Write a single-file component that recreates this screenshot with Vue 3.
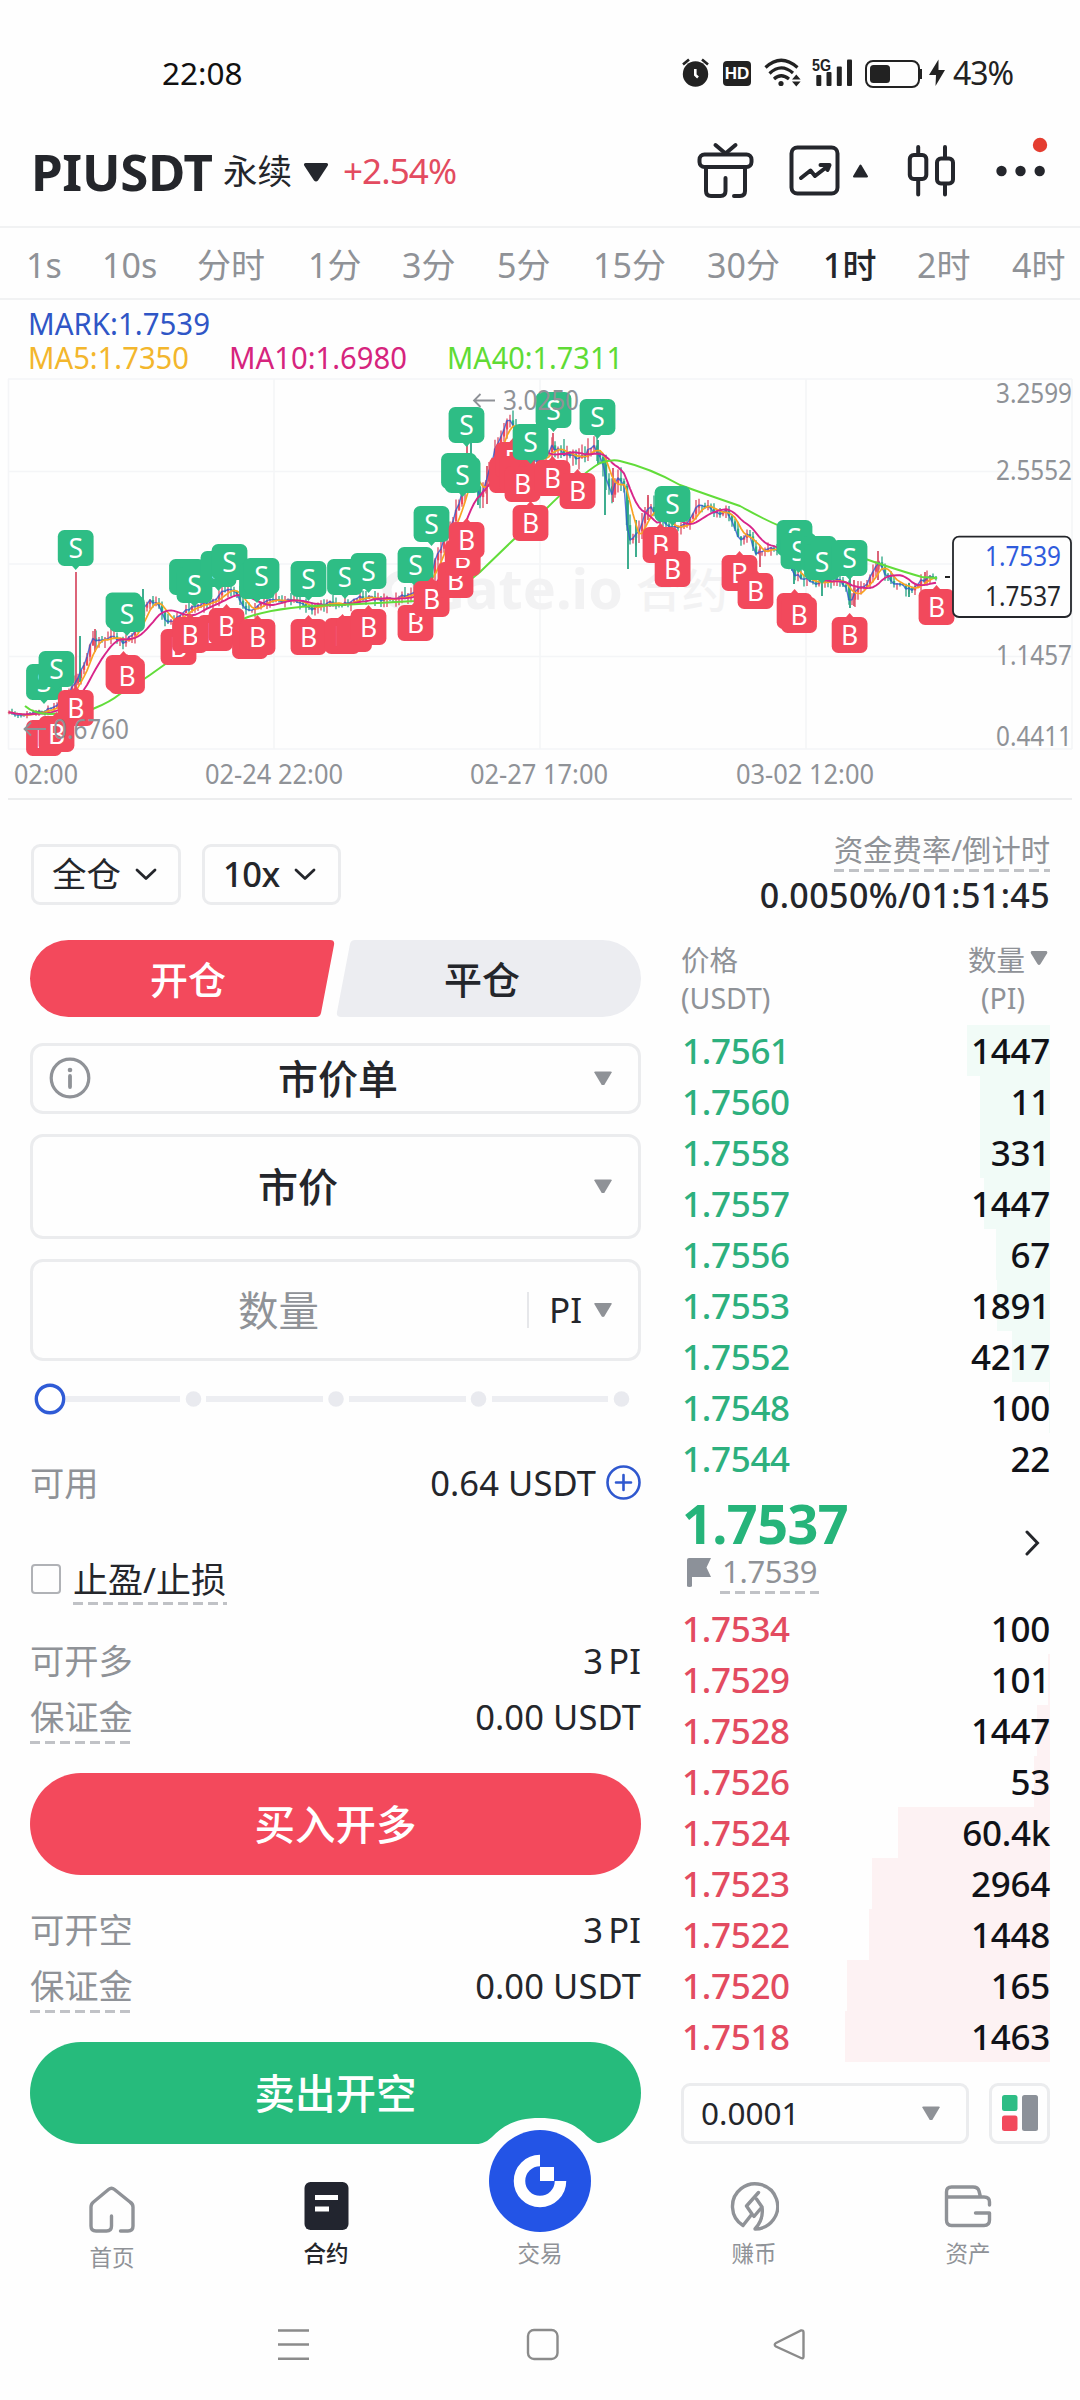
<script setup>
const periods = ['1s', '10s', '分时', '1分', '3分', '5分', '15分', '30分', '1时', '2时', '4时']
const periodX = [26, 102, 197, 308, 402, 497, 593, 707, 823, 917, 1012]
const activePeriod = '1时'

const asks = [
  ['1.7561', '1447', 83], ['1.7560', '11', 70], ['1.7558', '331', 70],
  ['1.7557', '1447', 66], ['1.7556', '67', 54], ['1.7553', '1891', 53],
  ['1.7552', '4217', 38], ['1.7548', '100', 1], ['1.7544', '22', 0]
]
const bids = [
  ['1.7534', '100', 0], ['1.7529', '101', 2], ['1.7528', '1447', 13],
  ['1.7526', '53', 16], ['1.7524', '60.4k', 152], ['1.7523', '2964', 178],
  ['1.7522', '1448', 181], ['1.7520', '165', 203], ['1.7518', '1463', 205]
]

/* Price track, in chart coordinates */
const track = [
  [8, 713], [20, 716], [45, 711], [58, 704], [70, 690], [76, 680], [85, 665], [92, 638], [100, 640], [115, 637],
  [125, 643], [135, 632], [143, 610], [150, 600], [158, 605], [165, 620], [172, 622], [185, 610], [200, 605],
  [215, 600], [225, 590], [235, 592], [245, 607], [250, 610], [260, 603], [275, 600], [300, 602], [312, 608],
  [330, 603], [345, 604], [360, 597], [380, 599], [400, 597], [415, 594], [425, 580], [432, 572], [437, 556],
  [445, 540], [452, 525], [460, 500], [468, 470], [475, 480], [480, 500], [488, 475], [495, 450], [502, 435],
  [508, 420], [515, 430], [525, 450], [535, 460], [545, 455], [553, 447], [562, 452], [575, 457], [585, 457],
  [593, 444], [600, 455], [605, 475], [612, 495], [618, 475], [625, 490], [628, 540], [635, 535], [640, 530],
  [647, 508], [655, 510], [665, 525], [680, 528], [690, 520], [697, 505], [710, 508], [718, 515], [725, 510],
  [732, 522], [740, 540], [748, 533], [757, 555], [768, 548], [775, 548], [785, 555], [795, 575], [805, 578],
  [815, 583], [825, 581], [840, 580], [847, 590], [850, 606], [856, 590], [865, 585], [872, 575], [878, 562],
  [888, 578], [898, 585], [912, 590], [922, 580], [930, 578], [937, 578]
]
const at = (x) => {
  let i = 1
  while (i < track.length - 1 && track[i][0] < x) i++
  const [x0, y0] = track[i - 1]
  const [x1, y1] = track[i]
  return y0 + ((y1 - y0) * (x - x0)) / (x1 - x0)
}
let seed = 11
const rnd = () => {
  seed = (seed * 16807) % 2147483647
  return seed / 2147483647
}
const candles = []
let prev = 713
for (let x = 9; x <= 937; x += 3) {
  const amp = x > 430 && x < 660 ? 6 : x < 60 ? 2 : 4
  const y = at(x) + (rnd() - 0.5) * amp
  const hi = Math.min(prev, y) - rnd() * amp * 2
  const lo = Math.max(prev, y) + rnd() * amp * 2
  candles.push({ x, o: prev, c: y, hi, lo, up: y < prev })
  prev = y
}
const spikes = [
  [76, 572, 688, 1], [80, 636, 682, 0], [95, 629, 652, 1], [143, 589, 612, 0], [467, 430, 475, 1], [471, 440, 475, 0],
  [478, 478, 505, 0], [487, 466, 504, 1], [553, 433, 450, 1], [598, 440, 465, 0], [605, 455, 515, 0],
  [613, 468, 502, 1], [628, 500, 569, 0], [636, 520, 557, 0], [648, 495, 520, 1], [760, 545, 567, 1],
  [794, 565, 584, 0], [822, 575, 596, 0], [850, 575, 608, 0], [854, 580, 606, 1], [878, 551, 580, 1],
  [909, 583, 597, 0], [925, 572, 584, 1]
]
const average = (n) =>
  candles
    .map((p, i) => {
      const w = candles.slice(Math.max(0, i - n + 1), i + 1)
      return p.x + ',' + (w.reduce((s, q) => s + q.c, 0) / w.length).toFixed(1)
    })
    .join(' ')
const markLine = average(1)
const ma5 = average(5)
const ma10 = average(11)
const ma40 = 'M25,706 Q34,714 50,714 Q85,713 95,708 Q110,702 120,694 Q140,682 150,675 L178,655 Q200,636 248,617 Q280,606 340,605 L415,601 Q455,594 480,572 L510,543 L545,510 Q580,475 600,463 Q612,459 620,461 Q650,468 680,485 Q705,494 740,506 Q765,520 780,526 L840,550 Q890,568 922,577 L937,578'

const markers = [
  ['S', 44, 682], ['S', 56.5, 669], ['S', 75.7, 548], ['S', 123.5, 610.5], ['S', 127, 614], ['S', 187, 577],
  ['S', 194.5, 585], ['S', 218.5, 569], ['S', 229.5, 562], ['S', 257, 581], ['S', 261.5, 576], ['S', 308.5, 579],
  ['S', 345, 577], ['S', 368.5, 571], ['S', 415.5, 565], ['S', 431.5, 524], ['S', 466.5, 425], ['S', 459, 471],
  ['S', 462.6, 475], ['S', 530.6, 442], ['S', 553.5, 410], ['S', 597.5, 417], ['S', 672.5, 504], ['S', 794.5, 538],
  ['S', 798.5, 551], ['S', 818.5, 554], ['S', 822, 562], ['S', 849.5, 558],
  ['B', 44, 738], ['B', 56.5, 734], ['B', 75.8, 708], ['B', 123.5, 673], ['B', 127, 676], ['B', 178.5, 647],
  ['B', 190, 635], ['B', 215, 633], ['B', 226.5, 626], ['B', 250, 641], ['B', 257.5, 637], ['B', 308.5, 637],
  ['B', 342.5, 636], ['', 354, 634], ['B', 368.5, 627], ['B', 415.5, 623], ['B', 431.6, 599], ['B', 455.5, 580],
  ['B', 462.7, 558], ['B', 466.6, 540], ['', 507, 475], ['B', 513, 460], ['', 517, 474], ['B', 522.5, 484], ['B', 530.5, 523],
  ['B', 552.5, 478], ['B', 577.5, 491], ['B', 660.5, 545], ['B', 672.6, 569], ['B', 739.5, 573], ['B', 755.5, 591],
  ['B', 794.6, 611], ['B', 799, 615], ['B', 849.6, 635], ['B', 936.5, 607]
].sort((a, b) => a[1] - b[1])
</script>

<template>
  <div class="screen">
    <div class="status">
      <span class="clock">22:08</span>
      <div class="status-right">
        <svg width="28" height="32" viewBox="682 57 28 32" fill="#222">
          <circle cx="695.5" cy="74" r="12.7" />
          <path d="M683 64.5L689 59.5M708 64.5L702 59.5" stroke="#222" stroke-width="2.6" />
          <path d="M695.3 69V75L698 77.5" stroke="#fff" stroke-width="2.6" fill="none" />
        </svg>
        <span class="hd">HD</span>
        <svg width="38" height="32" viewBox="764 56 38 32" fill="none" stroke="#222" stroke-width="3.2">
          <path d="M765.5 66.5Q781 52 797.5 66.5M769.5 72.5Q781 61.5 793 72M774 78Q781 71.5 789 78" />
          <circle cx="781" cy="82.5" r="2.6" fill="#222" stroke="none" />
          <path d="M792 78.5L796.3 73.5L800.6 78.5ZM792 80.5L796.3 85.5L800.6 80.5Z" fill="#222" stroke="none" />
        </svg>
        <svg width="42" height="32" viewBox="812 56 42 32" fill="#222">
          <text x="812" y="69.5" class="g5" textLength="19" lengthAdjust="spacingAndGlyphs">5G</text>
          <rect x="816.3" y="74" width="5" height="11" rx="1" />
          <rect x="826.5" y="71" width="5" height="14" rx="1" />
          <rect x="836.8" y="65.5" width="5" height="19.5" rx="1" />
          <rect x="847" y="58.5" width="5" height="26.5" rx="1" />
        </svg>
        <svg width="58" height="32" viewBox="865 56 58 32" fill="#222">
          <rect x="866" y="60" width="53" height="26" rx="7" fill="none" stroke="#222" stroke-width="2" />
          <rect x="870" y="64" width="20" height="18" rx="3.5" />
          <path d="M921 68V78" stroke="#222" stroke-width="2" />
        </svg>
        <svg class="bolt" width="17" height="28" viewBox="929 59 17 28"><path d="M938.5 59.5L929 75H936L935.5 86L945 70H938.5Z" fill="#222" /></svg>
        <span class="pct">43%</span>
      </div>
    </div>

    <header class="top">
      <span class="pair">PIUSDT</span>
      <span class="perp">永续</span>
      <svg class="caret" width="26" height="20" viewBox="302 162 26 20"><path d="M304.5 163H325.5Q328 163.5 326.5 166L317 180.5Q315 182.5 313 180.5L303.5 166Q302 163.5 304.5 163Z" fill="#24272d" /></svg>
      <span class="change">+2.54%</span>
      <svg class="tools" width="360" height="64" viewBox="695 136 360 64" fill="none" stroke="#24262c" stroke-width="4" stroke-linecap="round" stroke-linejoin="round">
        <rect x="699.5" y="154.5" width="52" height="12.5" rx="5" />
        <path d="M715.5 145L725.5 153.5L735.5 145" />
        <path d="M706 168V191Q706 196 711 196H720.5Q725.5 196 725.5 191V178" />
        <path d="M745 168V191Q745 196 740 196H734" />
        <rect x="791.5" y="147.5" width="46" height="46" rx="6" />
        <path d="M801 178L810.5 170.5L815 176L826 167.5M820.5 165H829.5L827.5 170" />
        <path d="M854 176.500L860.5 165.5L867 176.5Z" fill="#24262c" stroke-width="2" />
        <rect x="909.8" y="155" width="16.5" height="24" rx="4" />
        <path d="M918.2 147V153M918.2 181V194.5" />
        <rect x="937" y="158.5" width="16" height="25" rx="4" />
        <path d="M945 147V157M945 185V194.5" />
        <g fill="#24262c" stroke="none"><circle cx="1001.5" cy="171" r="5.2" /><circle cx="1020.5" cy="171" r="5.2" /><circle cx="1039.7" cy="171" r="5.2" /></g>
        <circle cx="1040" cy="145" r="7.2" fill="#e43d30" stroke="none" />
      </svg>
    </header>

    <nav class="periods">
      <span v-for="(p, i) in periods" :key="p" :class="{ on: p === activePeriod }" :style="{ width: (periodX[i + 1] || 1080) - periodX[i] + 'px' }">{{ p }}</span>
    </nav>

    <svg class="chart" width="1080" height="501" viewBox="0 300 1080 501">
      <g stroke="#f4f5f7" stroke-width="1.6" fill="none">
        <path d="M8 379H1072M8 471.5H1072M8 564H1072M8 656.5H1072M8 749H1072" />
        <path d="M8.5 379V749M274 379V749M540 379V749M806 379V749M1072 379V749" />
      </g>
      <path d="M8 799H1072" stroke="#e6e7e9" stroke-width="1.6" />
      <g fill="#f2f2f3">
        <circle cx="402" cy="590" r="15" fill="none" stroke="#f2f2f3" stroke-width="9" />
        <text x="425" y="609" class="wm" textLength="198" lengthAdjust="spacingAndGlyphs">Gate.io</text>
        <text x="636" y="607" class="wmc" textLength="92" lengthAdjust="spacingAndGlyphs">合约</text>
      </g>

      <g class="legend">
        <text x="28" y="334.5" fill="#2f56c6" textLength="182" lengthAdjust="spacingAndGlyphs">MARK:1.7539</text>
        <text x="28" y="368.5" fill="#f3b62c" textLength="161" lengthAdjust="spacingAndGlyphs">MA5:1.7350</text>
        <text x="229" y="368.5" fill="#d6247d" textLength="178" lengthAdjust="spacingAndGlyphs">MA10:1.6980</text>
        <text x="447" y="368.5" fill="#5fdb35" textLength="176" lengthAdjust="spacingAndGlyphs">MA40:1.7311</text>
      </g>

      <g stroke-width="1.3">
        <template v-for="c in candles" :key="c.x">
          <path :d="`M${c.x} ${c.hi}V${c.lo}`" :stroke="c.up ? '#dd4a62' : '#29a583'" />
          <path :d="`M${c.x} ${c.o}V${c.c}`" :stroke="c.up ? '#f1495d' : '#2bb083'" stroke-width="2.4" />
        </template>
        <path v-for="s in spikes" :key="s[0]" :d="`M${s[0]} ${s[1]}V${s[2]}`" :stroke="s[3] ? '#d9546a' : '#2aa583'" stroke-width="1.8" />
      </g>
      <g fill="none" stroke-width="1.7" stroke-linejoin="round">
        <polyline :points="markLine" stroke="#2f5bd0" stroke-width="1.4" opacity="0.8" />
        <polyline :points="ma5" stroke="#f8a323" />
        <polyline :points="ma10" stroke="#d8258a" stroke-width="1.9" />
        <path :d="ma40" stroke="#62dc3a" stroke-width="2" />
      </g>

      <g v-for="m in markers" :key="m.join()" class="pin">
        <rect :x="m[1] - 17.9" :y="m[2] - 18" width="35.8" height="36" rx="6.5" :fill="m[0] === 'S' ? '#2ebd85' : '#f2495c'" />
        <path v-if="m[0] === 'S'" :d="`M${m[1] - 4} ${m[2] + 17.5}h8l-4 4.5z`" fill="#2ebd85" />
        <path v-else :d="`M${m[1] - 4} ${m[2] - 17.5}h8l-4 -4.5z`" fill="#f2495c" />
        <text v-if="m[0]" :x="m[1]" :y="m[2] + 9.5">{{ m[0] }}</text>
      </g>

      <g class="axis">
        <path d="M495 400.5H474M480.5 394L474 400.5L480.5 407" />
        <text x="503" y="409.5" textLength="76" lengthAdjust="spacingAndGlyphs">3.0250</text>
        <path d="M46 729H24.5M31 722.5L24.5 729L31 735.5" />
        <text x="53" y="738.5" textLength="76" lengthAdjust="spacingAndGlyphs">0.6760</text>
        <text x="996" y="402.5" textLength="76" lengthAdjust="spacingAndGlyphs">3.2599</text>
        <text x="996" y="479.5" textLength="76" lengthAdjust="spacingAndGlyphs">2.5552</text>
        <text x="996" y="664.5" textLength="76" lengthAdjust="spacingAndGlyphs">1.1457</text>
        <text x="996" y="745.5" textLength="76" lengthAdjust="spacingAndGlyphs">0.4411</text>
        <text x="14" y="783.5" textLength="64" lengthAdjust="spacingAndGlyphs">02:00</text>
        <text x="205" y="783.5" textLength="138" lengthAdjust="spacingAndGlyphs">02-24 22:00</text>
        <text x="470" y="783.5" textLength="138" lengthAdjust="spacingAndGlyphs">02-27 17:00</text>
        <text x="736" y="783.5" textLength="138" lengthAdjust="spacingAndGlyphs">03-02 12:00</text>
      </g>
      <path d="M945 577H950" stroke="#222" stroke-width="2" />
      <rect x="953" y="536.7" width="118" height="80.3" rx="6" fill="#fefefe" stroke="#24262b" stroke-width="1.8" />
      <g class="legend tag">
        <text x="985" y="565.5" fill="#2f5bdc" textLength="76" lengthAdjust="spacingAndGlyphs">1.7539</text>
        <text x="985" y="605.5" fill="#24262b" textLength="76" lengthAdjust="spacingAndGlyphs">1.7537</text>
      </g>
    </svg>

    <main class="trade">
      <section class="form">
        <div class="selects">
          <button class="pick w1">全仓<svg width="22" height="13" viewBox="0 0 22 13"><path d="M2 2L11 10.5L20 2" /></svg></button>
          <button class="pick w2">10x<svg width="22" height="13" viewBox="0 0 22 13"><path d="M2 2L11 10.5L20 2" /></svg></button>
        </div>
        <div class="sides">
          <svg width="611" height="77" viewBox="0 0 611 77">
            <path d="M38.5 0H300Q305 0 304 5L291 73Q290 77 286 77H38.5A38.5 38.5 0 0 1 38.5 0Z" fill="#f3495c" />
            <path d="M325 0H572.5A38.5 38.5 0 0 1 572.5 77H311Q306 77 307 72L320 4Q321 0 325 0Z" fill="#ecedf1" />
          </svg>
          <div class="side-text"><span class="open">开仓</span><span class="close">平仓</span></div>
        </div>
        <div class="field f1">
          <svg class="info" width="42" height="42" viewBox="0 0 42 42" fill="none" stroke="#8f9297" stroke-width="3.2" stroke-linecap="round"><circle cx="21" cy="21" r="18.8" /><path d="M21 19V30" stroke-width="3.8" /><circle cx="21" cy="13" r="2.3" fill="#8f9297" stroke="none" /></svg>
          <span class="val">市价单</span>
          <i class="tri"></i>
        </div>
        <div class="field f2"><span class="val">市价</span><i class="tri"></i></div>
        <div class="field f3"><span class="val ph">数量</span><span class="unit">PI</span><i class="tri"></i></div>
        <svg class="slider" width="611" height="32" viewBox="30 1383 611 32">
          <path d="M66 1399H180M206 1399H323M349 1399H466M492 1399H608" stroke="#edeef2" stroke-width="6" />
          <circle v-for="x in [193.5, 336, 478.5, 621.5]" :key="x" :cx="x" cy="1399" r="7.8" fill="#e9eaef" />
          <circle cx="50" cy="1399" r="13.7" fill="#fff" stroke="#2f5bd6" stroke-width="3.4" />
        </svg>
        <div class="line avail">
          <span class="lab">可用</span>
          <span class="num">0.64 USDT</span>
          <svg width="35" height="35" viewBox="0 0 35 35" fill="none" stroke="#2f58cf" stroke-width="2.6" stroke-linecap="round"><circle cx="17.5" cy="17.5" r="16" /><path d="M17.5 10V25M10 17.5H25" /></svg>
        </div>
        <div class="tpsl"><i class="box"></i><span class="dash">止盈/止损</span></div>
        <div class="line l1"><span class="lab">可开多</span><span class="num tight">3 PI</span></div>
        <div class="line l2"><span class="lab dash">保证金</span><span class="num">0.00 USDT</span></div>
        <button class="cta buy">买入开多</button>
        <div class="line l3"><span class="lab">可开空</span><span class="num tight">3 PI</span></div>
        <div class="line l2"><span class="lab dash">保证金</span><span class="num">0.00 USDT</span></div>
        <button class="cta sell">卖出开空</button>
      </section>

      <section class="book">
        <div class="funding"><span class="ft dash">资金费率/倒计时</span><span class="fv">0.0050%/01:51:45</span></div>
        <div class="heads">
          <div>价格<br />(USDT)</div>
          <div class="hr"><span>数量<br />(PI)</span><svg width="18" height="15" viewBox="0 0 18 15"><path d="M2 0H16Q18 .5 17 2.5L10.5 13Q9 15 7.5 13L1 2.5Q0 .5 2 0Z" fill="#8f9297" /></svg></div>
        </div>
        <div v-for="r in asks" :key="r[0]" class="lvl ask">
          <span>{{ r[0] }}</span><b>{{ r[1] }}</b><i :style="{ width: r[2] + 'px' }"></i>
        </div>
        <div class="mid">
          <div>
            <div class="last">1.7537</div>
            <div class="mark">
              <svg width="24" height="30" viewBox="0 0 24 30"><path d="M0 2Q0 0 2 0H24L19.5 9.5L24 19H5V28Q5 29 2.5 29T0 28Z" fill="#8c9199" /></svg>
              <span class="dash">1.7539</span>
            </div>
          </div>
          <svg class="go" width="15" height="26" viewBox="0 0 15 26"><path d="M2 2L12.5 13L2 24" fill="none" stroke="#24262b" stroke-width="3" stroke-linecap="round" /></svg>
        </div>
        <div v-for="r in bids" :key="r[0]" class="lvl bid">
          <span>{{ r[0] }}</span><b>{{ r[1] }}</b><i :style="{ width: r[2] + 'px' }"></i>
        </div>
        <div class="depth">
          <div class="step">0.0001<i class="tri"></i></div>
          <div class="mode"><svg width="36" height="36" viewBox="0 0 36 36"><rect width="15.5" height="16" rx="2.5" fill="#2ebd85" /><rect y="20.5" width="15.5" height="15.5" rx="2.5" fill="#f2495c" /><rect x="20" width="16" height="36" rx="2.5" fill="#8c9199" /></svg></div>
        </div>
      </section>
    </main>

    <footer class="tabs">
      <svg class="bump" width="140" height="32" viewBox="470 2114 140 32"><path d="M470 2145Q484 2145 492 2137C502 2127 514 2118 540 2118S578 2127 588 2137Q596 2145 610 2145V2146H470Z" fill="#fefefe" /></svg>
      <div class="tab home">
        <svg width="50" height="50" viewBox="87 2184 50 50" fill="none" stroke="#8f9297" stroke-width="3.4" stroke-linecap="round" stroke-linejoin="round"><path d="M111.5 2216V2226Q111.5 2231 106.5 2231H96Q91 2231 91 2226V2207Q91 2204 93.5 2202L108.5 2189.5Q111.5 2187 114.5 2189.5L130 2202Q133 2204 133 2207V2226Q133 2231 128 2231H120.5" /></svg>
        首页
      </div>
      <div class="tab on">
        <svg width="50" height="50" viewBox="301 2181 50 50"><rect x="304.5" y="2182" width="44" height="48" rx="6" fill="#22252f" /><path d="M315 2197.5H338M315 2209H329" stroke="#fff" stroke-width="5" /></svg>
        合约
      </div>
      <div class="tab trade-tab">
        <svg width="102" height="102" viewBox="0 0 102 102"><circle cx="51" cy="51" r="51" fill="#2354e6" /><path d="M51 30.5A20.5 20.5 0 1 0 71.5 51" fill="none" stroke="#fff" stroke-width="11.5" /><rect x="51" y="37" width="14" height="14" fill="#fff" /></svg>
        交易
      </div>
      <div class="tab earn">
        <svg width="50" height="50" viewBox="730 2181 50 50" fill="none" stroke="#8f9297" stroke-width="3.4" stroke-linecap="round" stroke-linejoin="round"><path d="M744 2225.5A22.6 22.6 0 1 1 756 2229Q765 2219 763 2207L757.5 2199M744 2225.5L753 2214L747.5 2206L759.5 2192.500M753 2214L755 2216.500L763 2207" /></svg>
        赚币
      </div>
      <div class="tab">
        <svg width="50" height="50" viewBox="943 2181 50 50" fill="none" stroke="#8f9297" stroke-width="3.4" stroke-linecap="round" stroke-linejoin="round"><path d="M946.5 2197V2192Q946.5 2187 951.5 2187H973Q978 2187 979 2191L980.5 2197M946.5 2197H984Q989.5 2197 989.5 2202V2205M946.5 2197V2220Q946.5 2225.5 951.5 2225.5H984Q989.5 2225.5 989.5 2220V2213H975.5" /></svg>
        资产
      </div>
    </footer>

    <svg class="sys" width="1080" height="100" viewBox="0 2300 1080 100" fill="none" stroke="#8b8b8b" stroke-width="2.4">
      <path d="M278 2330.5H309M278 2344.5H309M278 2358.7H309" />
      <rect x="528" y="2330" width="29.5" height="29" rx="6" />
      <path d="M776 2343L801 2330.5Q803.5 2330 803.5 2332.5V2356.5Q803.5 2359 801 2358L776 2346.5Q773.5 2344.5 776 2343Z" />
    </svg>
  </div>
</template>

<style>
html, body { background: #fefefe; }
</style>

<style scoped>
.screen {
  width: 1080px;
  height: 2400px;
  overflow: hidden;
  background: #fefefe;
  color: #24262b;
  font-family: "Noto Sans", "Noto Sans CJK SC", sans-serif;
  display: flex;
  flex-direction: column;
}
svg { display: block; flex: none; }
button { font-family: inherit; color: inherit; margin: 0; padding: 0; border: 0; background: none; }
i { font-style: normal; }

.status { height: 94px; padding: 52px 66px 0 162px; box-sizing: border-box; display: flex; justify-content: space-between; line-height: 42px; font-size: 31.5px; color: #111; }
.status-right { display: flex; align-items: center; height: 42px; color: #222; }
.hd { width: 28px; height: 25px; margin: 0 13px 0 13px; border-radius: 4px; background: #222; color: #fff; font: 700 17px/25px "Liberation Sans", sans-serif; text-align: center; }
.status-right svg:nth-of-type(3) { margin: 0 11px 0 10px; }
.bolt { margin: 0 7px 0 6px; }
.pct { font-size: 32px; letter-spacing: -1px; width: 61px; white-space: nowrap; }
.g5 { font: 700 17px "Liberation Sans", sans-serif; }

.top { height: 134px; box-sizing: border-box; border-bottom: 2px solid #f1f2f3; display: flex; align-items: center; padding: 22px 25px 0 31px; white-space: nowrap; }
.pair { font-size: 51px; font-weight: 700; line-height: 60px; width: 192px; letter-spacing: -0.3px; }
.perp { font-size: 34.5px; line-height: 60px; }
.caret { margin: 2px 14px 0 11px; }
.change { font-size: 35px; line-height: 60px; color: #e34b60; letter-spacing: -0.9px; }
.tools { margin: -5px 0 0 auto; }

.periods { height: 72px; box-sizing: border-box; border-bottom: 2px solid #f1f2f3; display: flex; padding-left: 26px; line-height: 74px; font-size: 34px; color: #8f9297; white-space: nowrap; }
.periods span { flex: none; }
.periods .on { color: #24262b; font-weight: 500; }

.legend text { font-size: 30px; }
.tag text { font-size: 26.5px; }
.wm { font-size: 56px; font-weight: 700; }
.wmc { font-size: 46px; font-weight: 500; }
.pin text { font-size: 26.5px; fill: #fff; text-anchor: middle; }
.axis text { font-size: 26.5px; fill: #8f9297; }
.axis path { fill: none; stroke: #8f9297; stroke-width: 1.8; }

.dash { background: repeating-linear-gradient(90deg, #c0c2c6 0 10px, transparent 10px 15px) left bottom / 100% 3px no-repeat; }
.trade { display: flex; gap: 40px; padding: 0 30px; height: 1344px; }
.form { width: 611px; padding-top: 43px; flex: none; }
.selects { display: flex; gap: 21px; margin-left: 1px; }
.pick { height: 61px; box-sizing: border-box; border: 3px solid #ebecee; border-radius: 9px; display: flex; align-items: center; font-size: 34.5px; font-weight: 400; line-height: 56px; gap: 14px; white-space: nowrap; }
.pick svg { fill: none; stroke: #24262b; stroke-width: 2.8; stroke-linecap: round; stroke-linejoin: round; }
.w1 { width: 150px; padding-left: 18px; }
.w2 { width: 139px; padding-left: 18px; font-weight: 500; letter-spacing: -0.5px; }
.sides { margin-top: 35px; height: 77px; position: relative; }
.side-text { position: absolute; inset: 0; display: flex; font-size: 38px; line-height: 79px; font-weight: 500; text-align: center; }
.open { width: 316px; color: #fff; }
.close { width: 272px; }
.field { box-sizing: border-box; border: 3px solid #ebecee; border-radius: 13px; display: flex; align-items: center; justify-content: flex-end; padding-right: 26px; }
.f1 { height: 71px; margin-top: 26px; }
.f2 { height: 105px; margin-top: 20px; }
.f3 { height: 102px; margin-top: 20px; }
.info { margin: 0 auto 0 16px; }
.val { font-size: 40px; font-weight: 500; line-height: 60px; text-align: center; padding-top: 2px; }
.f1 .val { margin-right: 196px; }
.f2 .val { margin-right: 256px; }
.f3 .val { margin-right: 208px; }
.ph { color: #8f9297; font-weight: 400; font-size: 40.5px; }
.unit { border-left: 2px solid #e6e7ea; padding-left: 20px; margin-right: 15px; width: 30px; line-height: 36px; font-size: 35px; }
.tri { width: 18px; height: 14px; background: #8f9297; clip-path: polygon(0 4%, 8% 0, 92% 0, 100% 4%, 57% 96%, 50% 100%, 43% 96%); }
.slider { margin-top: 22px; }
.line { display: flex; align-items: center; white-space: nowrap; height: 40px; line-height: 40px; }
.lab { font-size: 34.3px; color: #8f9297; margin-right: auto; }
.num { font-size: 34.5px; letter-spacing: 0.1px; }
.tight { word-spacing: -4px; }
.avail { margin-top: 48px; }
.avail .num { margin-right: 10px; }
.tpsl { margin-top: 54px; height: 48px; display: flex; align-items: center; }
.tpsl .box { width: 30px; height: 30px; box-sizing: border-box; border: 2px solid #b0b2b6; border-radius: 4px; margin: 0 12px 3px 1px; }
.tpsl span { height: 48px; line-height: 46px; font-size: 35px; width: 154px; white-space: nowrap; }
.l1 { margin-top: 36px; }
.l2 { margin-top: 17px; height: 46px; align-items: flex-start; line-height: 38px; }
.l2 .lab { height: 46px; }
.l3 { margin-top: 35px; }
.cta { display: block; width: 611px; height: 102px; border-radius: 51px; margin-top: 29px; color: #fff; font-size: 40.5px; font-weight: 500; line-height: 104px; }
.buy { background: #f3495c; }
.sell { background: #26bb7c; }

.book { width: 369px; padding-top: 34px; }
.funding { display: flex; flex-direction: column; align-items: flex-end; white-space: nowrap; }
.ft { font-size: 29.3px; line-height: 31px; height: 37px; color: #8f9297; }
.fv { font-size: 34px; line-height: 40px; margin-top: 3px; font-weight: 500; letter-spacing: 0.4px; }
.heads { display: flex; justify-content: space-between; margin-top: 26px; height: 84px; font-size: 28.5px; line-height: 38.5px; color: #8f9297; }
.hr { display: flex; gap: 5px; text-align: right; padding-right: 2px; }
.hr svg { margin-top: 10px; }
.lvl { height: 51px; line-height: 51px; font-size: 35px; font-weight: 500; display: flex; justify-content: space-between; position: relative; letter-spacing: -0.3px; }
.lvl span { margin-left: 1px; }
.lvl b { font-weight: 500; color: #101218; z-index: 1; }
.lvl i { position: absolute; right: 0; top: 0; height: 51px; }
.ask span { color: #2db07e; }
.bid span { color: #e34b60; }
.ask i { background: #f1fbf7; }
.bid i { background: #fdf2f3; }
.mid { height: 119px; display: flex; justify-content: space-between; align-items: center; }
.last { font-size: 54px; line-height: 58px; font-weight: 700; color: #26b47a; margin-top: 1px; margin-left: 1px; letter-spacing: -0.6px; }
.mark { display: flex; align-items: center; gap: 9px; margin-left: 6px; font-size: 31px; color: #8f9297; letter-spacing: -0.3px; }
.mark .dash { line-height: 38px; height: 42px; padding: 0 2px; }
.go { margin-right: 10px; }
.depth { display: flex; justify-content: space-between; margin-top: 21px; }
.step, .mode { box-sizing: border-box; height: 61px; border: 3px solid #ebecee; border-radius: 9px; display: flex; align-items: center; justify-content: space-between; }
.step { width: 288px; padding: 0 26px 0 17px; font-size: 31.5px; line-height: 54px; }
.mode { width: 61px; justify-content: center; }

.tabs { height: 156px; display: grid; grid-template-columns: repeat(5, 214px); padding-left: 5px; position: relative; background: #fefefe; }
.bump { position: absolute; left: 470px; top: -30px; }
.tab { display: flex; flex-direction: column; align-items: center; padding-top: 37px; box-sizing: border-box; font-size: 22.5px; line-height: 30px; color: #8f9297; gap: 8px; position: relative; }
.home { padding-top: 40px; gap: 9px; }
.tab.on { color: #24262b; font-weight: 500; }
.trade-tab { padding-top: 0; margin-top: -14px; gap: 7px; }
</style>
